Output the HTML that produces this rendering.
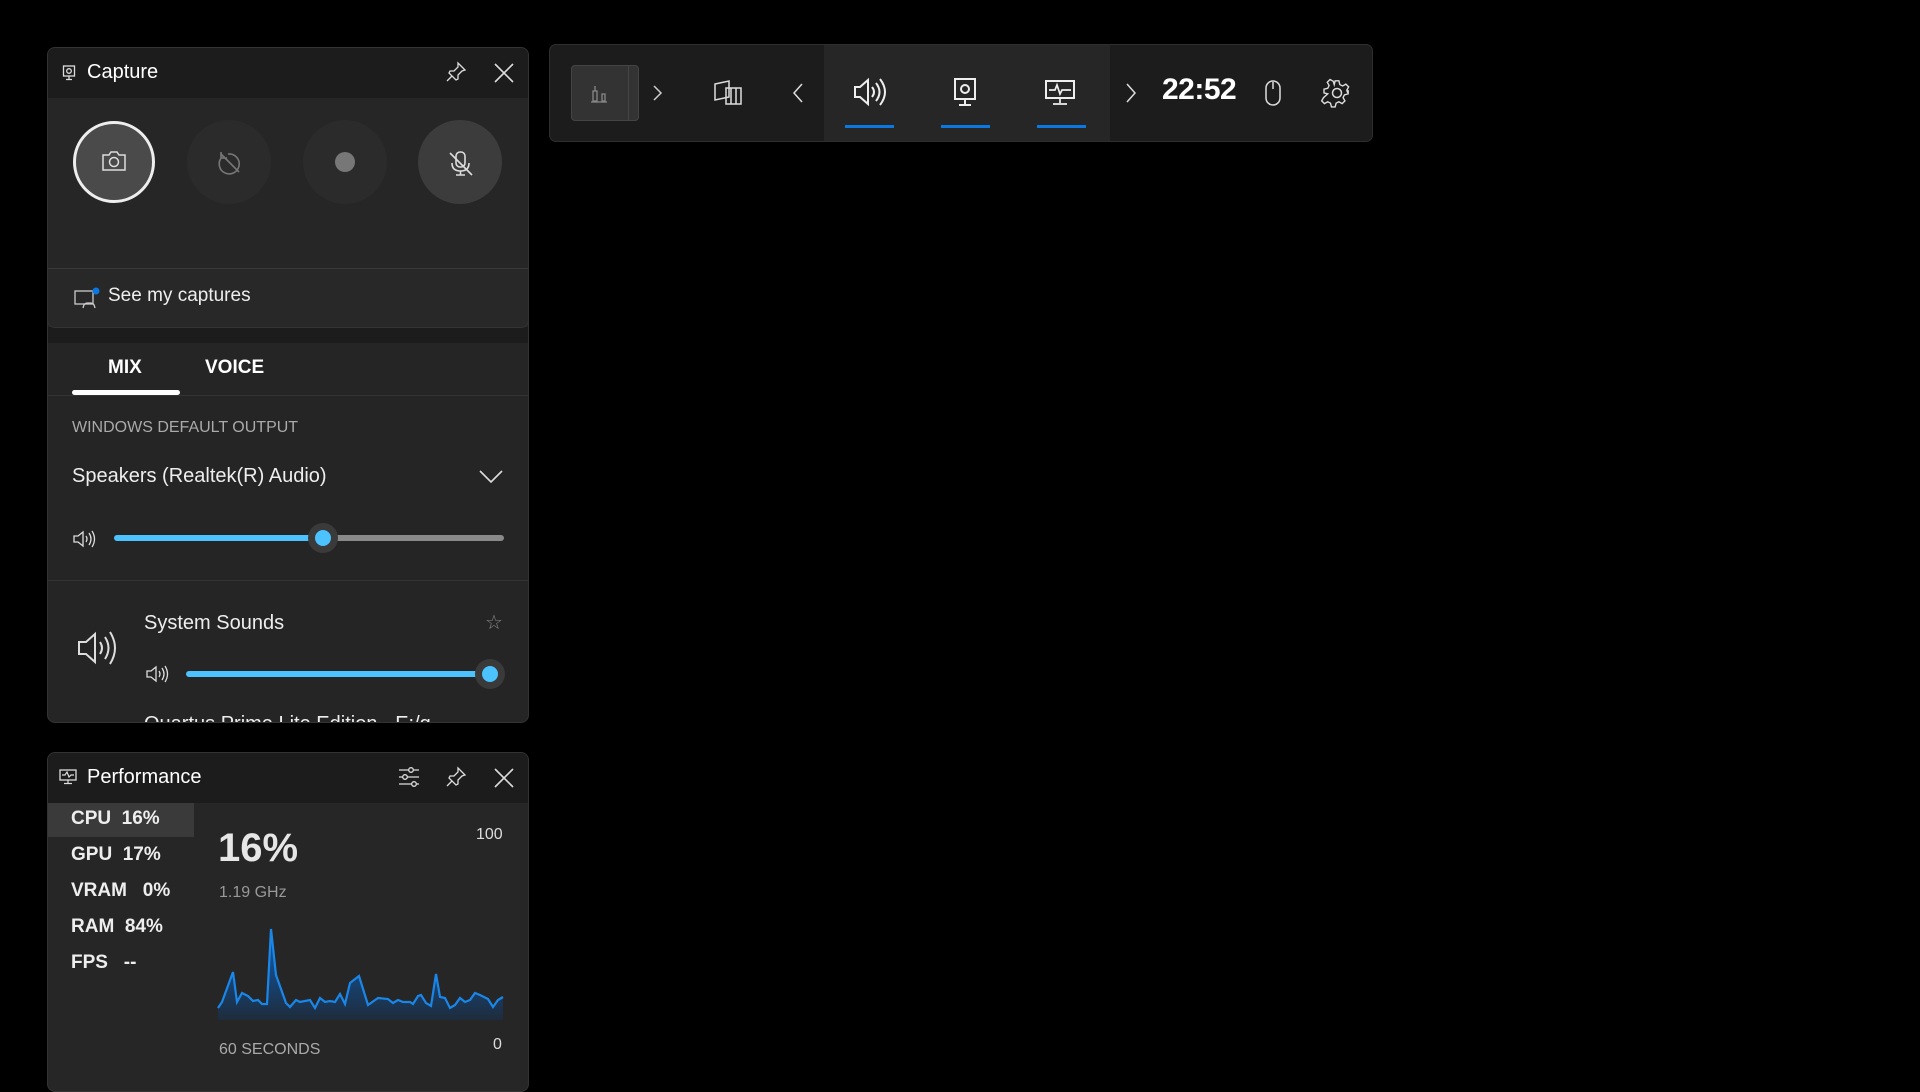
<!DOCTYPE html>
<html><head><meta charset="utf-8"><style>
*{margin:0;padding:0;box-sizing:border-box}
body{width:1920px;height:1080px;background:#000;font-family:"Liberation Sans",sans-serif;color:#fff;position:relative;overflow:hidden}
.a{position:absolute}
.t{position:absolute;white-space:nowrap;line-height:1}
svg{position:absolute;overflow:visible}
</style></head><body>

<div class="a" style="left:47px;top:300px;width:482px;height:423px;background:#252525;border-radius:0 0 8px 8px;border:1px solid #333"></div>
<div class="a" style="left:48px;top:327px;width:480px;height:16px;background:#1c1c1c"></div>
<div class="t" style="left:108px;top:358px;font-size:19px;font-weight:bold">MIX</div>
<div class="t" style="left:205px;top:358px;font-size:19px;font-weight:bold">VOICE</div>
<div class="a" style="left:72px;top:390px;width:108px;height:5px;background:#fff;border-radius:3px"></div>
<div class="a" style="left:48px;top:395px;width:480px;height:1px;background:#333"></div>
<div class="t" style="left:72px;top:420px;font-size:16px;color:#aaa">WINDOWS DEFAULT OUTPUT</div>
<div class="t" style="left:72px;top:466px;font-size:20px;color:#eee">Speakers (Realtek(R) Audio)</div>
<svg style="left:478px;top:468px" width="26" height="16"><path d="M2 3 L13 14 L24 3" stroke="#ddd" stroke-width="1.6" fill="none"/></svg>
<svg style="left:72px;top:529px" width="24" height="20"><path d="M2 7h4l5-4v14l-5-4H2z M14 7q2 3 0 6 M17 4q4 6 0 12 M20 2q5 8 0 16" stroke="#ddd" stroke-width="1.3" fill="none"/></svg>
<div class="a" style="left:114px;top:535px;width:210px;height:6px;background:#4cc2ff;border-radius:3px"></div>
<div class="a" style="left:324px;top:535px;width:180px;height:6px;background:#8a8a8a;border-radius:3px"></div>
<div class="a" style="left:308px;top:523px;width:30px;height:30px;background:#3a3a3a;border-radius:50%"></div>
<div class="a" style="left:315px;top:530px;width:16px;height:16px;background:#4cc2ff;border-radius:50%"></div>
<div class="a" style="left:48px;top:580px;width:480px;height:1px;background:#333"></div>
<svg style="left:76px;top:630px" width="40" height="36"><path d="M3 12h7l9-8v28l-9-8H3z M24 12q4 6 0 12 M29 7q7 11 0 22 M34 2q10 16 0 32" stroke="#ddd" stroke-width="2" fill="none"/></svg>
<div class="t" style="left:144px;top:613px;font-size:20px;color:#eee">System Sounds</div>
<div class="t" style="left:485px;top:613px;font-size:20px;color:#888">☆</div>
<svg style="left:145px;top:664px" width="24" height="20"><path d="M2 7h4l5-4v14l-5-4H2z M14 7q2 3 0 6 M17 4q4 6 0 12 M20 2q5 8 0 16" stroke="#ddd" stroke-width="1.3" fill="none"/></svg>
<div class="a" style="left:186px;top:671px;width:305px;height:6px;background:#4cc2ff;border-radius:3px"></div>
<div class="a" style="left:475px;top:659px;width:30px;height:30px;background:#3a3a3a;border-radius:50%"></div>
<div class="a" style="left:482px;top:666px;width:16px;height:16px;background:#4cc2ff;border-radius:50%"></div>
<div class="a" style="left:144px;top:714px;width:340px;height:8px;overflow:hidden"><div class="t" style="top:0;font-size:20px;color:#eee">Quartus Prime Lite Edition - E:/q</div></div>

<div class="a" style="left:47px;top:47px;width:482px;height:281px;background:#262626;border-radius:8px;border:1px solid #333;overflow:hidden">
 <div class="a" style="left:0;top:0;width:482px;height:50px;background:#1c1c1c"></div>
 <div class="a" style="left:0;top:220px;width:482px;height:1px;background:#3a3a3a"></div>
 <div class="a" style="left:0;top:221px;width:482px;height:60px;background:#282828"></div>
</div>
<svg style="left:62px;top:65px" width="14" height="16"><rect x="1.5" y="1" width="11" height="10" stroke="#ddd" fill="none" stroke-width="1.3"/><circle cx="7" cy="6" r="2.3" stroke="#ddd" fill="none" stroke-width="1.3"/><path d="M7 11v3M4 14.5h6" stroke="#ddd" stroke-width="1.3"/></svg>
<div class="t" style="left:87px;top:62px;font-size:20px">Capture</div>
<svg style="left:445px;top:61px" width="22" height="22"><path d="M13 2l7 7-3 1-4 4 0 4-2 1-7-7 1-2 4 0 4-4z M7 15l-5 5" stroke="#ddd" stroke-width="1.3" fill="none"/></svg>
<svg style="left:494px;top:63px" width="20" height="20"><path d="M1 1L19 19M19 1L1 19" stroke="#ddd" stroke-width="1.6"/></svg>
<div class="a" style="left:73px;top:121px;width:82px;height:82px;border-radius:50%;background:#4a4a4a;border:3px solid #eee"></div>
<svg style="left:101px;top:150px" width="26" height="22"><path d="M2 5h6l2-3h6l2 3h6v15H2z" stroke="#ddd" stroke-width="1.5" fill="none"/><circle cx="13" cy="12" r="4.5" stroke="#ddd" stroke-width="1.5" fill="none"/></svg>
<div class="a" style="left:187px;top:120px;width:84px;height:84px;border-radius:50%;background:#2b2b2b"></div>
<svg style="left:216px;top:149px" width="28" height="28"><path d="M6 8a10 10 0 1 0 6-3 M5 3v6h6 M5 5l18 18" stroke="#777" stroke-width="1.6" fill="none"/></svg>
<div class="a" style="left:303px;top:120px;width:84px;height:84px;border-radius:50%;background:#2b2b2b"></div>
<div class="a" style="left:335px;top:152px;width:20px;height:20px;border-radius:50%;background:#777"></div>
<div class="a" style="left:418px;top:120px;width:84px;height:84px;border-radius:50%;background:#3c3c3c"></div>
<svg style="left:448px;top:150px" width="26" height="28"><rect x="8" y="2" width="9" height="15" rx="4" stroke="#ddd" stroke-width="1.6" fill="none"/><path d="M4 13q0 8 8.5 8q8.5 0 8.5-8 M12.5 21v4M8 25h9 M2 3l22 22" stroke="#ddd" stroke-width="1.6" fill="none"/></svg>
<svg style="left:74px;top:288px" width="26" height="22"><rect x="1" y="3" width="18" height="13" stroke="#ccc" stroke-width="1.3" fill="none"/><path d="M9 20q1-5 4-5h4q3 0 4 5" stroke="#ccc" stroke-width="1.3" fill="none"/><circle cx="22" cy="3" r="3.5" fill="#0a78e0"/></svg>
<div class="t" style="left:108px;top:286px;font-size:19px;color:#eee">See my captures</div>

<div class="a" style="left:47px;top:752px;width:482px;height:340px;background:#262626;border-radius:8px;border:1px solid #333;overflow:hidden">
 <div class="a" style="left:0;top:0;width:482px;height:50px;background:#1c1c1c"></div>
 <div class="a" style="left:0;top:50px;width:146px;height:34px;background:#3a3a3a"></div>
</div>
<svg style="left:59px;top:769px" width="18" height="16"><rect x="1" y="1" width="16" height="10" stroke="#ddd" fill="none" stroke-width="1.3"/><path d="M3 6h3l2-3 2 5 2-2h3 M9 11v3M5 14.5h8" stroke="#ddd" stroke-width="1.2" fill="none"/></svg>
<div class="t" style="left:87px;top:767px;font-size:20px">Performance</div>
<svg style="left:397px;top:766px" width="24" height="22"><path d="M2 4h20M2 11h20M2 18h20" stroke="#ddd" stroke-width="1.3"/><circle cx="14" cy="4" r="2.3" fill="#1c1c1c" stroke="#ddd" stroke-width="1.3"/><circle cx="8" cy="11" r="2.3" fill="#1c1c1c" stroke="#ddd" stroke-width="1.3"/><circle cx="17" cy="18" r="2.3" fill="#1c1c1c" stroke="#ddd" stroke-width="1.3"/></svg>
<svg style="left:445px;top:766px" width="22" height="22"><path d="M13 2l7 7-3 1-4 4 0 4-2 1-7-7 1-2 4 0 4-4z M7 15l-5 5" stroke="#ddd" stroke-width="1.3" fill="none"/></svg>
<svg style="left:494px;top:768px" width="20" height="20"><path d="M1 1L19 19M19 1L1 19" stroke="#ddd" stroke-width="1.6"/></svg>
<div class="t" style="left:71px;top:809px;font-size:19px;font-weight:bold;color:#eee">CPU&nbsp; 16%</div>
<div class="t" style="left:71px;top:845px;font-size:19px;font-weight:bold;color:#eee">GPU&nbsp; 17%</div>
<div class="t" style="left:71px;top:881px;font-size:19px;font-weight:bold;color:#eee">VRAM&nbsp;&nbsp; 0%</div>
<div class="t" style="left:71px;top:917px;font-size:19px;font-weight:bold;color:#eee">RAM&nbsp; 84%</div>
<div class="t" style="left:71px;top:953px;font-size:19px;font-weight:bold;color:#eee">FPS&nbsp;&nbsp; --</div>
<div class="t" style="left:218px;top:828px;font-size:40px;font-weight:bold;color:#e6e6e6">16%</div>
<div class="t" style="left:476px;top:827px;font-size:16px;color:#ddd">100</div>
<div class="t" style="left:219px;top:885px;font-size:16px;color:#999">1.19 GHz</div>
<svg style="left:218px;top:925px" width="286" height="96"><defs><linearGradient id="g" x1="0" y1="0" x2="0" y2="1"><stop offset="0" stop-color="#0d5fb8"/><stop offset="1" stop-color="#1e2c3c"/></linearGradient></defs>
<path d="M0 83L4 77L15 47L19 77L24 68L30 71L35 76L40 75L44 79L49 79L53 4L58 50L68 78L72 82L78 75L82 77L92 75L97 83L102 73L107 77L112 76L117 77L122 69L127 79L132 58L141 51L150 80L160 73L170 74L175 78L180 75L185 77L192 77L195 79L200 71L203 70L208 78L213 81L218 49L222 72L227 73L232 83L237 80L242 73L247 77L252 75L257 68L262 70L270 74L275 82L280 75L285 72L285 95L0 95Z" fill="url(#g)"/>
<path d="M0 83L4 77L15 47L19 77L24 68L30 71L35 76L40 75L44 79L49 79L53 4L58 50L68 78L72 82L78 75L82 77L92 75L97 83L102 73L107 77L112 76L117 77L122 69L127 79L132 58L141 51L150 80L160 73L170 74L175 78L180 75L185 77L192 77L195 79L200 71L203 70L208 78L213 81L218 49L222 72L227 73L232 83L237 80L242 73L247 77L252 75L257 68L262 70L270 74L275 82L280 75L285 72" stroke="#1a86e8" stroke-width="2.2" fill="none"/></svg>
<div class="t" style="left:219px;top:1042px;font-size:16px;color:#aaa">60 SECONDS</div>
<div class="t" style="left:493px;top:1037px;font-size:16px;color:#ddd">0</div>

<div class="a" style="left:549px;top:44px;width:824px;height:98px;background:#1c1c1c;border-radius:7px;border:1px solid #2e2e2e;overflow:hidden">
 <div class="a" style="left:274px;top:0;width:286px;height:98px;background:#262626"></div>
</div>
<div class="a" style="left:571px;top:65px;width:68px;height:56px;background:#333;border:1px solid #444;border-radius:4px"></div>
<div class="a" style="left:628px;top:65px;width:1px;height:56px;background:#444"></div>
<svg style="left:590px;top:83px" width="18" height="22"><path d="M5 3v5M3 8h4v10H3zM12 11h3v7h-3z M1 19h16" stroke="#888" stroke-width="1.3" fill="none"/></svg>
<svg style="left:652px;top:84px" width="12" height="18"><path d="M2 2l7 7-7 7" stroke="#ccc" stroke-width="1.5" fill="none"/></svg>
<svg style="left:712px;top:78px" width="34" height="30"><path d="M3 6l14-3v16l-14 3z M14 10h15v16H14z M19 10v16M24 10v16" stroke="#ddd" stroke-width="1.5" fill="none"/></svg>
<svg style="left:792px;top:82px" width="12" height="22"><path d="M10 2L2 11l8 9" stroke="#ddd" stroke-width="1.5" fill="none"/></svg>
<svg style="left:853px;top:77px" width="34" height="30"><path d="M2 10h5l8-7v24l-8-7H2z M19 10q4 5 0 10 M23 6q7 9 0 18 M27 2q10 13 0 26" stroke="#eee" stroke-width="2" fill="none"/></svg>
<svg style="left:953px;top:77px" width="24" height="32"><rect x="2" y="2" width="20" height="20" stroke="#eee" stroke-width="2" fill="none"/><circle cx="12" cy="12" r="4" stroke="#eee" stroke-width="2" fill="none"/><path d="M12 22v5M6 28h12" stroke="#eee" stroke-width="2"/></svg>
<svg style="left:1044px;top:79px" width="32" height="28"><rect x="2" y="2" width="28" height="17" stroke="#eee" stroke-width="2" fill="none"/><path d="M5 11h6l2-5 3 9 2-4h9 M16 19v5M9 25h14" stroke="#eee" stroke-width="1.7" fill="none"/></svg>
<div class="a" style="left:845px;top:125px;width:49px;height:3px;background:#0a78e0"></div>
<div class="a" style="left:941px;top:125px;width:49px;height:3px;background:#0a78e0"></div>
<div class="a" style="left:1037px;top:125px;width:49px;height:3px;background:#0a78e0"></div>
<svg style="left:1125px;top:82px" width="12" height="22"><path d="M2 2l8 9-8 9" stroke="#ddd" stroke-width="1.5" fill="none"/></svg>
<div class="t" style="left:1162px;top:75px;font-size:30px;font-weight:bold;letter-spacing:-0.5px">22:52</div>
<svg style="left:1264px;top:79px" width="18" height="28"><rect x="2" y="2" width="14" height="24" rx="7" stroke="#ddd" stroke-width="1.5" fill="none"/><path d="M9 3v7" stroke="#ddd" stroke-width="1.5"/></svg>
<svg style="left:1323px;top:79px" width="28" height="28" viewBox="0 0 28 28"><path d="M12 2h4l1 4 3 1.5 3.5-2 3 3-2 3.5L25.5 15 26 12v4l-4 1-1.5 3 2 3.5-3 3-3.5-2-3 1.5-1 4h-4l-1-4-3-1.5-3.5 2-3-3 2-3.5L4 16l-4-1v-4l4-1 1.5-3-2-3.5 3-3 3.5 2L11 6z" transform="translate(1 0) scale(0.93)" stroke="#ddd" stroke-width="1.5" fill="none"/><circle cx="14" cy="14" r="4.5" stroke="#ddd" stroke-width="1.5" fill="none"/></svg>

</body></html>
